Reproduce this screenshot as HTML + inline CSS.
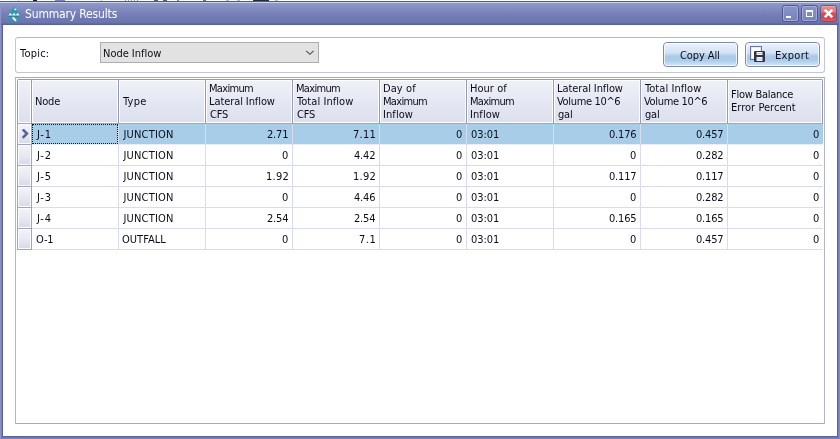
<!DOCTYPE html>
<html lang="en">
<head>
<meta charset="utf-8">
<title>Summary Results</title>
<style>
*{box-sizing:border-box;margin:0;padding:0}
html,body{width:840px;height:439px;overflow:hidden;background:#fff}
body{position:relative;font-family:"DejaVu Sans Condensed","Liberation Sans",sans-serif;font-size:11px;color:#0c0c18;line-height:13px}
.abs{position:absolute}
#win{position:absolute;left:0;top:0;width:840px;height:439px;will-change:transform}
.x{position:absolute;white-space:nowrap;line-height:13px;height:13px}
.tt{font-size:12px;line-height:16px;height:16px;color:#fff}
#noise{left:0;top:0;width:290px;height:1px;background:linear-gradient(90deg,#fff 18px,#c8cce0 18px,#c8cce0 19px,#fff 19px,#fff 33px,#1c1c2c 33px,#1c1c2c 37px,#fff 37px,#fff 55px,#7d86b8 55px,#7d86b8 65px,#fff 65px,#fff 101px,#c0c4d8 101px,#c0c4d8 102px,#fff 102px,#fff 125px,#9a9aa8 125px,#9a9aa8 126px,#fff 126px,#fff 128px,#9a9aa8 128px,#9a9aa8 129px,#fff 129px,#fff 131px,#9a9aa8 131px,#9a9aa8 132px,#fff 132px,#fff 134px,#9a9aa8 134px,#9a9aa8 135px,#fff 135px,#fff 137px,#9a9aa8 137px,#9a9aa8 138px,#fff 138px,#fff 154px,#5a607c 154px,#5a607c 158px,#fff 158px,#fff 163px,#5a607c 163px,#5a607c 167px,#fff 167px,#fff 177px,#8a8ea4 177px,#8a8ea4 179px,#fff 179px,#fff 203px,#6a6e88 203px,#6a6e88 206px,#fff 206px,#fff 226px,#b8bcd0 226px,#b8bcd0 229px,#fff 229px,#fff 237px,#b8bcd0 237px,#b8bcd0 240px,#fff 240px,#fff 253px,#2a2c44 253px,#2a2c44 269px,#fff 269px,#fff 275px,#b8c4d8 275px,#b8c4d8 278px,#fff 278px)}
#frame{left:0;top:1px;width:840px;height:438px;background:#6c76b0}
#tbar{left:0;top:1px;width:840px;height:24px;background:linear-gradient(#525a80 0,#525a80 1px,#cad3f2 1px,#cad3f2 2px,#9199c7 2px,#8992c3 5px,#7f89be 9px,#7680b7 13px,#6f79b2 17px,#6a74ae 22px,#596294 23px,#596294 24px)}
#lb{left:0;top:3px;width:1px;height:436px;background:#8d95c6}
#lb2{left:1px;top:25px;width:2px;height:412px;background:linear-gradient(90deg,#747eb8 0,#747eb8 1px,#5c6599 1px)}
#rb{left:839px;top:3px;width:1px;height:436px;background:#838cc2}
#rb2{left:837px;top:25px;width:2px;height:412px;background:linear-gradient(90deg,#5c6599 0,#5c6599 1px,#747eb8 1px)}
#bb{left:2px;top:436px;width:836px;height:3px;background:linear-gradient(#5c6599 0,#5c6599 1px,#6c76b0 1px,#6c76b0 2px,#7b85bd 2px)}
#client{left:3px;top:25px;width:834px;height:411px;background:#fff}
.wb{top:4px;width:17px;height:17px;border:1px solid #4e5890;border-radius:2.5px;background:linear-gradient(#8995c8,#7682bc)}
.wb i{position:absolute;left:0;top:0;right:0;bottom:0;border:1px solid rgba(190,200,235,.55);border-radius:2px}
#gbox{left:12px;top:12px;width:810px;height:36px;border:1px solid #c6c6ce;border-top-color:#b9b9c2;border-radius:3px;background:#fff}
#combo{left:84px;top:4px;width:219px;height:21px;border:1px solid #adadad;background:#e2e2e2}
.btn{top:4px;width:75px;height:25px;border:1px solid #7f88ae;border-radius:4px;background:linear-gradient(#f1f6fd 0,#e4edf9 12%,#d3e2f4 42%,#bdd6ee 50%,#a9cbe9 58%,#abcdea 76%,#c3dcf3 90%,#d3e6f8 100%)}
.btn i{position:absolute;left:0;top:0;right:0;bottom:0;border:1px solid rgba(255,255,255,.7);border-radius:3px}
#grid{left:12px;top:52px;width:810px;height:347px;border:1px solid #a9abbd;border-left-color:#b4b6c6;border-right-color:#b4b6c6;background:#fff}
.hc{top:1px;height:45px;border:1px solid #959ab3;border-bottom-color:#9fa5c0;border-left-width:0;background:linear-gradient(#eff1f8,#e5e8f3 50%,#dcdfed)}
.hc:before{content:"";position:absolute;left:0;top:0;right:0;bottom:0;border:1px solid #fdfdff}
.ic{left:1px;width:15px;height:21px;border:1px solid #a0a4bc;border-top:0;background:linear-gradient(#f3f4f9,#e6e8f1 55%,#d6d9e7);box-shadow:inset 0 0 0 1px #fbfbfe}
.row{left:16px;width:791px;height:21px;border-bottom:1px solid #d9dcee}
.sel{background:#a7cde9;border-bottom-color:#e9edf7}
.v{top:46px;width:1px;height:126px;background:#d9dcee}
#focus{left:0;top:0;width:86px;height:20px;border:1px dotted #1a1a1a}
.wc{background:linear-gradient(#f0c8c0 0,#e9888d 1px,#e6777d 6px,#db4d55 7px,#d9464e 12px,#de5a61 15px);border-color:#5d5a8c}
</style>
</head>
<body>
<div id="win">
<div id="noise" class="abs"></div>
<div id="frame" class="abs"></div>
<div id="tbar" class="abs">
<svg class="abs" style="left:7px;top:4px" width="15" height="18" viewBox="0 0 15 18"><path d="M7 1.5C8.2 4 12.9 8.2 12.9 11.7A5.9 5.4 0 0 1 1.1 11.7C1.1 8.2 5.8 4 7 1.5Z" fill="#2b9ab5"/><path d="M1.4 10.5L3.3 7.8L5.1 10.2L7 7.8L8.9 10.2L10.7 7.8L12.6 10.5Z" fill="#f2f7fb"/><path d="M1.6 11.3H12.4" stroke="#58607a" stroke-width=".8"/><path d="M6.3 12.8L8.5 15.3" stroke="#f4f8fc" stroke-width="1.9" stroke-linecap="round"/><ellipse cx="8.3" cy="4.4" rx="1.1" ry=".8" fill="#f4f8fc"/></svg>
<span class="x tt" style="left:25px;top:5px;letter-spacing:-.16px">Summary Results</span>
<div class="abs wb" style="left:782px"><i></i><b class="abs" style="left:3px;top:10px;width:5px;height:2px;background:#fff"></b></div>
<div class="abs wb" style="left:801px"><i></i><b class="abs" style="left:4px;top:4px;width:7px;height:7px;border:1px solid #fff;border-top-width:2px"></b></div>
<div class="abs wb wc" style="left:820px"><svg class="abs" style="left:3px;top:3px" width="9" height="9" viewBox="0 0 9 9"><path d="M0.8 0.8l7.4 7.4M8.2 0.8l-7.4 7.4" stroke="#fff" stroke-width="2.5"/></svg></div>
</div>
<div id="lb" class="abs"></div>
<div id="lb2" class="abs"></div>
<div id="rb" class="abs"></div>
<div id="rb2" class="abs"></div>
<div id="bb" class="abs"></div>
<div id="client" class="abs">
<div id="gbox" class="abs">
<span class="x" style="left:4px;top:9px;letter-spacing:.22px">Topic:</span>
<div id="combo" class="abs"><span class="x" style="left:2px;top:4px;letter-spacing:-.02px">Node Inflow</span><svg class="abs" style="left:204px;top:7px" width="10" height="7" viewBox="0 0 10 7"><path d="M1.2 0.9L4.9 4.4L8.6 0.9" stroke="#4a4a50" stroke-width="1.05" fill="none"/></svg></div>
<div class="abs btn" style="left:647px"><i></i><span class="x" style="left:16px;top:6px;letter-spacing:-.10px">Copy All</span></div>
<div class="abs btn" style="left:729px"><i></i><svg class="abs" style="left:3px;top:2px" width="17" height="17" viewBox="0 0 17 17"><rect x="1.5" y="1.5" width="11" height="13" fill="#fdfdff" stroke="#6e7494"/><rect x="2.5" y="2.5" width="9" height="11" fill="none" stroke="#e4eaf6"/><rect x="5" y="6" width="11" height="11" rx="1" fill="#30334b"/><rect x="7.5" y="7" width="6" height="3" fill="#f2f5fb"/><rect x="7.5" y="12" width="6" height="4" fill="#eef1f8"/><rect x="8" y="8" width="5" height="1" fill="#c4c9da"/><rect x="8" y="13.5" width="5" height="1" fill="#c9cede"/></svg><span class="x" style="left:29px;top:6px;letter-spacing:.30px">Export</span></div>
</div>
<div id="grid" class="abs">
<div class="abs hc" style="left:1px;width:15px;border-left-width:1px;border-top-left-radius:2px"></div>
<div class="abs hc" style="left:16px;width:87px"><span class="x" style="left:3px;top:15px;letter-spacing:-.20px">Node</span></div>
<div class="abs hc" style="left:103px;width:87px"><span class="x" style="left:4px;top:15px;letter-spacing:.27px">Type</span></div>
<div class="abs hc" style="left:190px;width:87px"><span class="x" style="left:3px;top:2px;letter-spacing:-.67px">Maximum</span><span class="x" style="left:3px;top:15px;letter-spacing:-.09px">Lateral Inflow</span><span class="x" style="left:4px;top:28px;letter-spacing:-.20px">CFS</span></div>
<div class="abs hc" style="left:277px;width:87px"><span class="x" style="left:3px;top:2px;letter-spacing:-.67px">Maximum</span><span class="x" style="left:4px;top:15px;letter-spacing:.06px">Total Inflow</span><span class="x" style="left:4px;top:28px;letter-spacing:-.20px">CFS</span></div>
<div class="abs hc" style="left:364px;width:87px"><span class="x" style="left:3px;top:2px;letter-spacing:.08px">Day of</span><span class="x" style="left:3px;top:15px;letter-spacing:-.67px">Maximum</span><span class="x" style="left:3px;top:28px;letter-spacing:.08px">Inflow</span></div>
<div class="abs hc" style="left:451px;width:87px"><span class="x" style="left:3px;top:2px;letter-spacing:.03px">Hour of</span><span class="x" style="left:3px;top:15px;letter-spacing:-.67px">Maximum</span><span class="x" style="left:3px;top:28px;letter-spacing:.08px">Inflow</span></div>
<div class="abs hc" style="left:538px;width:87px"><span class="x" style="left:3px;top:2px;letter-spacing:-.09px">Lateral Inflow</span><span class="x" style="left:3px;top:15px;letter-spacing:-.34px">Volume 10^6</span><span class="x" style="left:4px;top:28px;letter-spacing:-.20px">gal</span></div>
<div class="abs hc" style="left:625px;width:87px"><span class="x" style="left:4px;top:2px;letter-spacing:.06px">Total Inflow</span><span class="x" style="left:3px;top:15px;letter-spacing:-.34px">Volume 10^6</span><span class="x" style="left:4px;top:28px;letter-spacing:-.20px">gal</span></div>
<div class="abs hc" style="left:712px;width:95px;border-top-right-radius:2px"><span class="x" style="left:3px;top:8px;letter-spacing:-.26px">Flow Balance</span><span class="x" style="left:3px;top:21px;letter-spacing:.03px">Error Percent</span></div>
<div class="abs ic" style="top:46px"><svg class="abs" style="left:3px;top:5px" width="9" height="10" viewBox="0 0 9 10"><path d="M1.7 0.4L5.9 4.6L1.7 8.8" stroke="#5360a2" stroke-width="2.5" fill="none"/></svg></div>
<div class="abs row sel" style="top:46px"><span class="x" style="left:5px;top:4px;letter-spacing:.80px">J-1</span><span class="x" style="left:91.4px;top:4px;letter-spacing:.20px">JUNCTION</span><span class="x" style="left:235px;top:4px;letter-spacing:-.20px">2.71</span><span class="x" style="left:321px;top:4px;letter-spacing:.27px">7.11</span><span class="x" style="left:424px;top:4px;letter-spacing:-.20px">0</span><span class="x" style="left:439px;top:4px;letter-spacing:-.03px">03:01</span><span class="x" style="left:577px;top:4px;letter-spacing:-.20px">0.176</span><span class="x" style="left:664px;top:4px;letter-spacing:-.20px">0.457</span><span class="x" style="left:781px;top:4px;letter-spacing:-.20px">0</span><i id="focus" class="abs"></i></div>
<div class="abs ic" style="top:67px"></div>
<div class="abs row" style="top:67px"><span class="x" style="left:5px;top:4px;letter-spacing:.80px">J-2</span><span class="x" style="left:91.4px;top:4px;letter-spacing:.20px">JUNCTION</span><span class="x" style="left:250px;top:4px;letter-spacing:-.20px">0</span><span class="x" style="left:322px;top:4px;letter-spacing:-.20px">4.42</span><span class="x" style="left:424px;top:4px;letter-spacing:-.20px">0</span><span class="x" style="left:439px;top:4px;letter-spacing:-.03px">03:01</span><span class="x" style="left:598px;top:4px;letter-spacing:-.20px">0</span><span class="x" style="left:664px;top:4px;letter-spacing:-.20px">0.282</span><span class="x" style="left:781px;top:4px;letter-spacing:-.20px">0</span></div>
<div class="abs ic" style="top:88px"></div>
<div class="abs row" style="top:88px"><span class="x" style="left:5px;top:4px;letter-spacing:.80px">J-5</span><span class="x" style="left:91.4px;top:4px;letter-spacing:.20px">JUNCTION</span><span class="x" style="left:234px;top:4px;letter-spacing:.27px">1.92</span><span class="x" style="left:321px;top:4px;letter-spacing:.27px">1.92</span><span class="x" style="left:424px;top:4px;letter-spacing:-.20px">0</span><span class="x" style="left:439px;top:4px;letter-spacing:-.03px">03:01</span><span class="x" style="left:577px;top:4px;letter-spacing:-.20px">0.117</span><span class="x" style="left:664px;top:4px;letter-spacing:-.20px">0.117</span><span class="x" style="left:781px;top:4px;letter-spacing:-.20px">0</span></div>
<div class="abs ic" style="top:109px"></div>
<div class="abs row" style="top:109px"><span class="x" style="left:5px;top:4px;letter-spacing:.80px">J-3</span><span class="x" style="left:91.4px;top:4px;letter-spacing:.20px">JUNCTION</span><span class="x" style="left:250px;top:4px;letter-spacing:-.20px">0</span><span class="x" style="left:322px;top:4px;letter-spacing:-.20px">4.46</span><span class="x" style="left:424px;top:4px;letter-spacing:-.20px">0</span><span class="x" style="left:439px;top:4px;letter-spacing:-.03px">03:01</span><span class="x" style="left:598px;top:4px;letter-spacing:-.20px">0</span><span class="x" style="left:664px;top:4px;letter-spacing:-.20px">0.282</span><span class="x" style="left:781px;top:4px;letter-spacing:-.20px">0</span></div>
<div class="abs ic" style="top:130px"></div>
<div class="abs row" style="top:130px"><span class="x" style="left:5px;top:4px;letter-spacing:.80px">J-4</span><span class="x" style="left:91.4px;top:4px;letter-spacing:.20px">JUNCTION</span><span class="x" style="left:235px;top:4px;letter-spacing:-.20px">2.54</span><span class="x" style="left:322px;top:4px;letter-spacing:-.20px">2.54</span><span class="x" style="left:424px;top:4px;letter-spacing:-.20px">0</span><span class="x" style="left:439px;top:4px;letter-spacing:-.03px">03:01</span><span class="x" style="left:577px;top:4px;letter-spacing:-.20px">0.165</span><span class="x" style="left:664px;top:4px;letter-spacing:-.20px">0.165</span><span class="x" style="left:781px;top:4px;letter-spacing:-.20px">0</span></div>
<div class="abs ic" style="top:151px"></div>
<div class="abs row" style="top:151px"><span class="x" style="left:4px;top:4px;letter-spacing:-.20px">O-1</span><span class="x" style="left:90px;top:4px;letter-spacing:.03px">OUTFALL</span><span class="x" style="left:250px;top:4px;letter-spacing:-.20px">0</span><span class="x" style="left:327px;top:4px;letter-spacing:.50px">7.1</span><span class="x" style="left:424px;top:4px;letter-spacing:-.20px">0</span><span class="x" style="left:439px;top:4px;letter-spacing:-.03px">03:01</span><span class="x" style="left:598px;top:4px;letter-spacing:-.20px">0</span><span class="x" style="left:664px;top:4px;letter-spacing:-.20px">0.457</span><span class="x" style="left:781px;top:4px;letter-spacing:-.20px">0</span></div>
<div class="abs v" style="left:102px"></div>
<div class="abs v" style="left:189px"></div>
<div class="abs v" style="left:276px"></div>
<div class="abs v" style="left:363px"></div>
<div class="abs v" style="left:450px"></div>
<div class="abs v" style="left:537px"></div>
<div class="abs v" style="left:624px"></div>
<div class="abs v" style="left:711px"></div>
</div>
</div>
</div>
</body>
</html>
